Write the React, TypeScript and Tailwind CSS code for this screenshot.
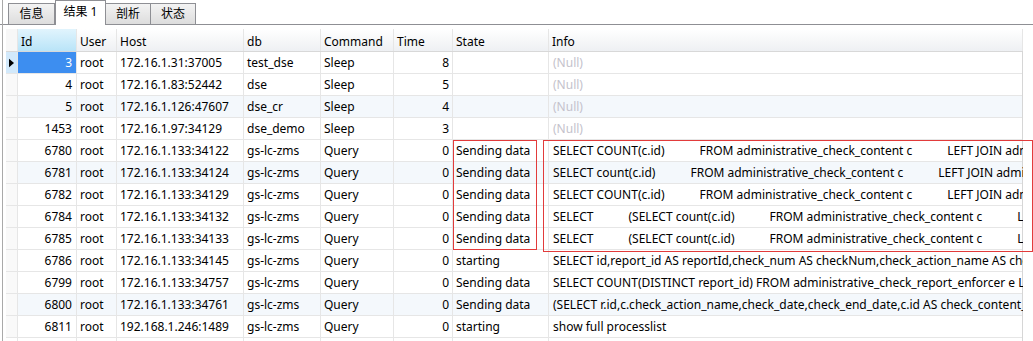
import React from "react";

type Row = {
  id: string;
  host: string;
  db: string;
  cmd: string;
  time: string;
  state: string;
  info: string[] | null;
  tint?: boolean;
};

const Q1 = ["SELECT COUNT(c.id)", "FROM administrative_check_content c", "LEFT JOIN administrative_check_item i"];
const Q2 = ["SELECT count(c.id)", "FROM administrative_check_content c", "LEFT JOIN administrative_check_item i"];
const Q3 = ["SELECT", "(SELECT count(c.id)", "FROM administrative_check_content c", "LEFT JOIN administrative_check_item i"];

const rows: Row[] = [
  { id: "3", host: "172.16.1.31:37005", db: "test_dse", cmd: "Sleep", time: "8", state: "", info: null },
  { id: "4", host: "172.16.1.83:52442", db: "dse", cmd: "Sleep", time: "5", state: "", info: null },
  { id: "5", host: "172.16.1.126:47607", db: "dse_cr", cmd: "Sleep", time: "4", state: "", info: null, tint: true },
  { id: "1453", host: "172.16.1.97:34129", db: "dse_demo", cmd: "Sleep", time: "3", state: "", info: null },
  { id: "6780", host: "172.16.1.133:34122", db: "gs-lc-zms", cmd: "Query", time: "0", state: "Sending data", info: Q1 },
  { id: "6781", host: "172.16.1.133:34124", db: "gs-lc-zms", cmd: "Query", time: "0", state: "Sending data", info: Q2, tint: true },
  { id: "6782", host: "172.16.1.133:34129", db: "gs-lc-zms", cmd: "Query", time: "0", state: "Sending data", info: Q1 },
  { id: "6784", host: "172.16.1.133:34132", db: "gs-lc-zms", cmd: "Query", time: "0", state: "Sending data", info: Q3 },
  { id: "6785", host: "172.16.1.133:34133", db: "gs-lc-zms", cmd: "Query", time: "0", state: "Sending data", info: Q3 },
  { id: "6786", host: "172.16.1.133:34145", db: "gs-lc-zms", cmd: "Query", time: "0", state: "starting", info: ["SELECT id,report_id AS reportId,check_num AS checkNum,check_action_name AS checkActionName,check_date"] },
  { id: "6799", host: "172.16.1.133:34757", db: "gs-lc-zms", cmd: "Query", time: "0", state: "Sending data", info: ["SELECT COUNT(DISTINCT report_id) FROM administrative_check_report_enforcer e LEFT JOIN"] },
  { id: "6800", host: "172.16.1.133:34761", db: "gs-lc-zms", cmd: "Query", time: "0", state: "Sending data", info: ["(SELECT r.id,c.check_action_name,check_date,check_end_date,c.id AS check_content_id,r.status"], tint: true },
  { id: "6811", host: "192.168.1.246:1489", db: "gs-lc-zms", cmd: "Query", time: "0", state: "starting", info: ["show full processlist"] },
];

const headers = [
  { label: "", w: "w-[12px]" },
  { label: "Id", w: "w-[59px]" },
  { label: "User", w: "w-[40px]" },
  { label: "Host", w: "w-[127px]" },
  { label: "db", w: "w-[77px]" },
  { label: "Command", w: "w-[73px]" },
  { label: "Time", w: "w-[59px]" },
  { label: "State", w: "w-[96px]" },
  { label: "Info", w: "w-[474px]" },
];

const cell = "h-full shrink-0 border-r border-[#e6e6e6] px-[3px] overflow-hidden whitespace-nowrap flex items-center";

const tabs = [
  { label: "信息", w: "w-[47px]", active: false },
  { label: "结果 1", w: "w-[51px]", active: true },
  { label: "剖析", w: "w-[46px]", active: false },
  { label: "状态", w: "w-[46px]", active: false },
];

export default function App() {
  return (
    <div
      className="relative w-[1033px] h-[341px] overflow-hidden bg-white text-[12px] text-black"
      style={{ fontFamily: '"Noto Sans", "Noto Sans CJK SC", sans-serif' }}
    >
      {/* left frame line */}
      <div className="absolute left-[2px] top-0 bottom-0 w-px bg-[#a9a9a9]" />

      {/* Tabs */}
      <div className="flex h-[25px] items-end border-b border-[#8e8f94] pl-[8px]">
        {tabs.map((t) => (
          <div
            key={t.label}
            className={`${t.w} flex items-center justify-center border border-[#8e8f94] ${
              t.active
                ? "relative -mb-px h-[25px] border-b-0 bg-white pb-[2px]"
                : "h-[21px] -ml-px first:ml-0 border-b-0 bg-gradient-to-b from-[#f3f3f3] to-[#dddddd]"
            }`}
          >
            {t.label}
          </div>
        ))}
      </div>

      {/* Grid */}
      <div className="relative ml-[6px] mt-[4px] w-[1017px] border-r border-[#d6d6d6]">
        {/* Header */}
        <div className="flex h-[23px] border-b border-[#d8d8d8] bg-gradient-to-b from-white to-[#eef0f3]">
          {headers.map((h, i) => (
            <div
              key={i}
              className={`${h.w} ${cell} pt-[3px] border-[#dcdcdc] ${
                i === 1 ? "bg-gradient-to-b from-[#e1f4fd] to-[#b9e4f8]" : ""
              } ${i === 0 ? "bg-[#f7f7f7]" : ""}`}
            >
              {h.label}
            </div>
          ))}
        </div>

        {/* Rows */}
        {rows.map((r, ri) => (
          <div
            key={r.id}
            className={`flex h-[22px] border-b border-[#e6e6e6] ${r.tint ? "bg-[#f4f8fc]" : "bg-white"}`}
          >
            <div className={`w-[12px] ${cell} px-0 justify-center ${ri === 0 ? "bg-[#d2e9fb]" : "bg-[#f9f9f9]"}`}>
              {ri === 0 && (
                <svg width="6" height="10" viewBox="0 0 6 10">
                  <polygon points="0,0 6,5 0,10" fill="#000" />
                </svg>
              )}
            </div>
            <div className={`w-[59px] ${cell} justify-end pr-[4px] ${ri === 0 ? "bg-[#3d8ef0] text-white" : ""}`}>
              {r.id}
            </div>
            <div className={`w-[40px] ${cell}`}>root</div>
            <div className={`w-[127px] ${cell}`}>{r.host}</div>
            <div className={`w-[77px] ${cell}`}>{r.db}</div>
            <div className={`w-[73px] ${cell}`}>{r.cmd}</div>
            <div className={`w-[59px] ${cell} justify-end`}>{r.time}</div>
            <div className={`w-[96px] ${cell}`}>{r.state}</div>
            <div className={`w-[474px] ${cell} border-r-0 pl-[4px]`}>
              {r.info === null ? (
                <span className="text-[#c4c2cc]">(Null)</span>
              ) : (
                r.info.map((seg, si) => (
                  <span key={si} className={si > 0 ? "ml-[35px]" : ""}>
                    {seg}
                  </span>
                ))
              )}
            </div>
          </div>
        ))}

        {/* trailing partial row */}
        <div className="flex h-[22px]">
          {headers.map((h, i) => (
            <div key={i} className={`${h.w} ${cell} ${i === 8 ? "border-r-0" : ""}`} />
          ))}
        </div>
      </div>

      {/* red highlight boxes */}
      <div className="absolute left-[453px] top-[140px] w-[84px] h-[110px] border border-[#e23b3b]" />
      <div className="absolute left-[543px] top-[140px] w-[490px] h-[112px] border border-[#e23b3b]" />
    </div>
  );
}
